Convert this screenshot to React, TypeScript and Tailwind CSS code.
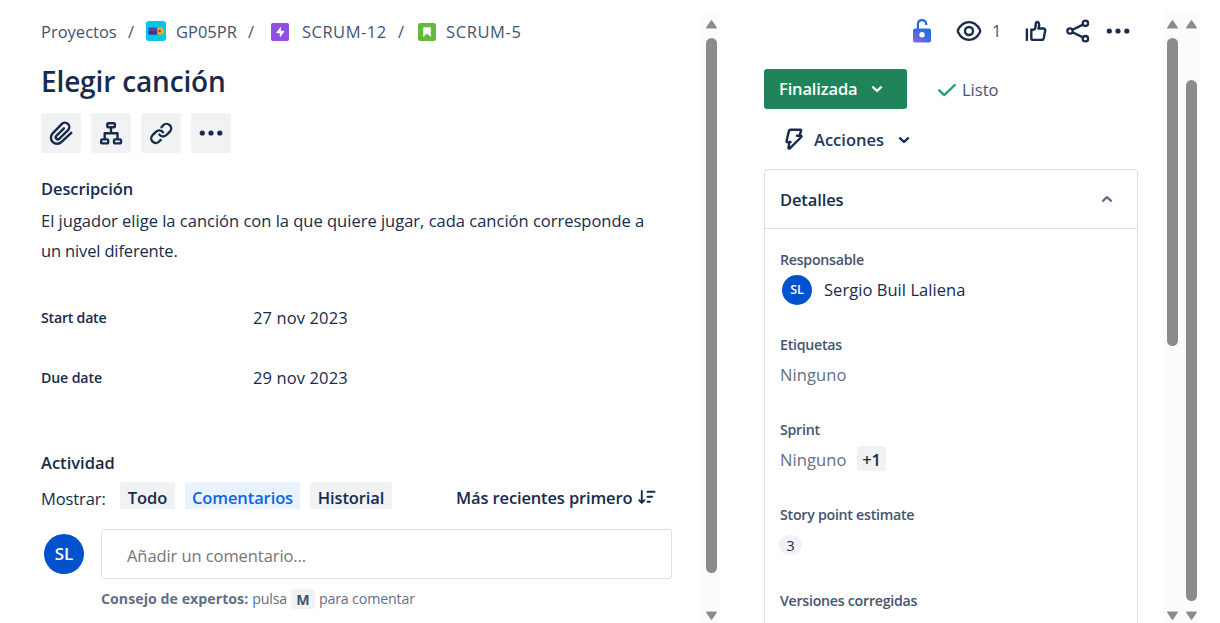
import React, { type ReactNode } from "react";

function Slash({ className }: { className: string }) {
  return <span className={`shrink-0 ${className}`}>/</span>;
}

function Chevron({ up = false }: { up?: boolean }) {
  return (
    <svg width="12" height="10" viewBox="0 0 12 10" fill="none" stroke="currentColor" strokeWidth="2.3" strokeLinecap="round" strokeLinejoin="round">
      <path d={up ? "M2 6.8 6 3.2l4 3.6" : "M2 3.2 6 7l4-3.8"} />
    </svg>
  );
}

function ToolButton({ label, children }: { label: string; children: ReactNode }) {
  return (
    <button aria-label={label} className="h-10 w-10 rounded-[3px] bg-[#f1f2f4]">
      <svg width="40" height="40" viewBox="0 0 40 40" fill="none" stroke="#172b4d" strokeWidth="2.4" strokeLinecap="round" strokeLinejoin="round">
        {children}
      </svg>
    </button>
  );
}

function Dots() {
  return (
    <g fill="#172b4d" stroke="none">
      <circle cx="11.3" cy="20" r="2.6" />
      <circle cx="20" cy="20" r="2.6" />
      <circle cx="28.8" cy="20" r="2.6" />
    </g>
  );
}

function ScrollBar({ thumb }: { thumb: string }) {
  return (
    <div className="mt-[10px] flex h-[613px] w-[19px] shrink-0 flex-col items-center bg-[#fcfcfc] pt-[10px] pb-[3px]">
      <svg width="11" height="9" viewBox="0 0 11 9" className="shrink-0" fill="#8b8b8b">
        <path d="M4.8.6q.7-.9 1.4 0L10.8 7.4q.5 1.1-.6 1.1H.8Q-.3 8.5.2 7.4Z" />
      </svg>
      <div className={`w-[11px] shrink-0 rounded-full bg-[#8b8b8b] ${thumb}`} />
      <svg width="11" height="9" viewBox="0 0 11 9" className="mt-auto shrink-0" fill="#8b8b8b">
        <path d="M4.8 8.4q.7.9 1.4 0L10.8 1.6Q11.3.5 10.2.5H.8Q-.3.5.2 1.6Z" />
      </svg>
    </div>
  );
}

function Field({ label, className = "mb-[25px]", children }: { label: string; className?: string; children?: ReactNode }) {
  return (
    <div className={className}>
      <div className="h-[30px] text-[14.2px] leading-[30px] font-semibold tracking-[-0.26px] text-[#44546f]">{label}</div>
      <div className="flex h-[30px] items-center leading-[30px]">{children}</div>
    </div>
  );
}

function IssueMain() {
  return (
    <main className="w-[702px] shrink-0 pt-[17px] pl-[41px]">
      <nav className="flex h-[30px] items-center leading-[30px] text-[#44546f]">
        <span className="w-[87px] shrink-0">Proyectos</span>
        <Slash className="w-[18px]" />
        <span className="w-[31px] shrink-0">
          <svg className="mb-[2px]" width="20" height="20" viewBox="0 0 20 20">
            <rect width="20" height="20" rx="3" fill="#00c7e5" />
            <path d="M2.5 6.500H12v7H3.500q-1 0-1-1Z" fill="#5243aa" />
            <path d="M2.500 10H12v3.500H3.500q-1 0-1-1Z" fill="#403294" />
            <path d="M12 6.500h3q3 .4 3 3.500t-3 3.500h-3Z" fill="#ffab00" />
            <path d="M11 6.500h1v7h-1Z" fill="#ff7452" />
            <path d="M13.700 8.700v2.600M12.400 10h2.600" stroke="#403294" strokeWidth="1" />
          </svg>
        </span>
        <span className="-ml-px w-[72px] shrink-0">GP05PR</span>
        <Slash className="w-[23px]" />
        <span className="w-[31px] shrink-0">
          <svg width="18" height="18" viewBox="0 0 18 18">
            <rect width="18" height="18" rx="2" fill="#904ee2" />
            <path d="M9.800 4v4h2.900q.8.1.3.8L9 14V10H6q-.9-.1-.4-.8Z" fill="#fff" stroke="#fff" strokeWidth=".4" strokeLinejoin="round" />
          </svg>
        </span>
        <span className="w-[96px] shrink-0 tracking-[0.5px]">SCRUM-12</span>
        <Slash className="w-[20px]" />
        <span className="w-[28px] shrink-0">
          <svg width="18" height="18" viewBox="0 0 18 18">
            <rect width="18" height="18" rx="2" fill="#63ba3c" />
            <path d="M5.200 5q0-.8.8-.8h6q.8 0 .8.8v9L9 10.400 5.200 14Z" fill="#fff" />
          </svg>
        </span>
        <span className="tracking-[0.6px]">SCRUM-5</span>
      </nav>

      <h1 className="mt-[14px] h-10 text-[28px] leading-10 font-semibold tracking-[-0.15px]">Elegir canción</h1>

      <div className="mt-[12px] flex gap-[10px]">
        <ToolButton label="Adjuntar">
          <path transform="translate(7.600 7.400) scale(1.020)" d="m22.200 12.200-9.500 8.900a6 6 0 0 1-8.700-8.400l8.800-9.100a4.300 4.300 0 0 1 6.300 5.900l-8.500 8.400a2 2 0 0 1-3-2.800l7.400-7.300" />
        </ToolButton>
        <ToolButton label="Añadir incidencia secundaria">
          <rect x="16.300" y="10.200" width="7.600" height="4" rx="1" />
          <rect x="10.200" y="26.400" width="7" height="4" rx="1" />
          <rect x="23" y="26.400" width="7" height="4" rx="1" />
          <path d="M20 15v5M13.700 25.500V20.300h12.800v5.200" />
        </ToolButton>
        <ToolButton label="Enlazar">
          <g transform="translate(8.200 8.400)">
            <path d="M10.200 13.200a4.600 4.600 0 0 0 7 .4l3.500-3.400a4.400 4.400 0 0 0-6.700-6.300l-1.700 2" />
            <path d="M13.800 10.800a4.600 4.600 0 0 0-7-.4l-3.500 3.400a4.400 4.400 0 0 0 6.700 6.300l1.500-1.600" />
          </g>
        </ToolButton>
        <ToolButton label="Más"><Dots /></ToolButton>
      </div>

      <h2 className="mt-[21px] h-[30px] leading-[30px] font-semibold tracking-[-0.1px]">Descripción</h2>
      <p className="mt-[2px] h-[60px] w-[625px] leading-[30px]">
        El jugador elige la canción con la que quiere jugar, cada canción corresponde a<br />
        <span className="tracking-[-0.15px]">un nivel diferente.</span>
      </p>

      <div className="mt-[37px] flex h-[30px] items-center leading-[30px]">
        <span className="w-[212px] text-[14.2px] font-semibold tracking-[-0.25px]">Start date</span>
        <span className="tracking-[0.12px]">27 nov 2023</span>
      </div>
      <div className="mt-[30px] flex h-[30px] items-center leading-[30px]">
        <span className="w-[212px] text-[14.2px] font-semibold tracking-[-0.15px]">Due date</span>
        <span className="tracking-[0.12px]">29 nov 2023</span>
      </div>

      <h2 className="mt-[55px] h-[30px] leading-[30px] font-semibold">Actividad</h2>
      <div className="mt-1 flex h-[27px] leading-[31px]">
        <span className="w-[79px] pt-px tracking-[-0.1px]">Mostrar:</span>
        <button className="mr-[10px] w-[55px] rounded-t-[3px] bg-[#f1f2f4] font-semibold tracking-[-0.1px]">Todo</button>
        <button className="mr-[10px] w-[115px] rounded-t-[3px] bg-[#e9f2ff] font-semibold tracking-[-0.1px] text-[#0c66e4]">Comentarios</button>
        <button className="w-[82px] rounded-t-[3px] bg-[#f1f2f4] font-semibold tracking-[-0.13px]">Historial</button>
        <button className="ml-[64px] flex font-semibold tracking-[-0.14px] whitespace-nowrap">
          Más recientes primero
          <svg className="mt-[8px] ml-[6px]" width="18" height="15" viewBox="0 0 18 15" fill="none" stroke="#172b4d" strokeWidth="1.900" strokeLinecap="round" strokeLinejoin="round">
            <path d="M3.800 1v11.500M1.200 10.200l2.600 2.700 2.600-2.700M9.500 1.700h7M9.500 6.700h4.600M9.500 11.700h2.400" />
          </svg>
        </button>
      </div>

      <div className="mt-5 flex">
        <span className="mt-[5px] mr-[17px] ml-[3px] h-10 w-10 rounded-full bg-[#0052cc] text-center text-[17px] leading-10 font-semibold text-white">SL</span>
        <div>
          <div className="h-[50px] w-[571px] rounded-[3px] border border-[#dcdfe4] pl-[25px] leading-[51px] tracking-[-0.08px] text-[#757575]">Añadir un comentario…</div>
          <div className="mt-[10px] flex h-[20px] items-center text-[14.2px] leading-[22px] text-[#626f86]">
            <b className="tracking-[0.02px]">Consejo de expertos:</b>
            <span className="ml-[4px] tracking-[-0.2px]">pulsa</span>
            <kbd className="mr-[4px] ml-[4px] h-5 w-6 rounded-[3px] bg-[#f1f2f4] text-center font-['Open_Sans',sans-serif] font-bold text-[#44546f]">M</kbd>
            <span className="tracking-[-0.14px]">para comentar</span>
          </div>
        </div>
      </div>
    </main>
  );
}

function IssueSide() {
  return (
    <aside className="h-[623px] w-[442px] shrink-0 overflow-hidden pt-[11px] pl-[43px]">
      <div className="flex h-10 items-center pl-[148px]">
        <svg className="mr-[23px] shrink-0" width="20" height="26" viewBox="0 0 20 26">
          <defs>
            <linearGradient id="lock" x1="0" y1="1" x2="1" y2="0">
              <stop offset="0" stopColor="#8b68dc" />
              <stop offset=".55" stopColor="#3f6ae0" />
              <stop offset="1" stopColor="#1d6ae5" />
            </linearGradient>
          </defs>
          <path d="M5.900 11V6q.3-3.800 4.100-3.800t4.200 3.800v1" fill="none" stroke="#2468e2" strokeWidth="2.200" />
          <rect x="1" y="10.400" width="18" height="14.200" rx="2" fill="url(#lock)" />
          <circle cx="10" cy="16.700" r="2.700" fill="#fff" />
        </svg>
        <svg className="mr-[9px] shrink-0" width="28" height="24" viewBox="0 0 28 24" fill="none" stroke="#172b4d" strokeWidth="2.400">
          <path d="M14 3.100c4.900 0 8.400 2.900 10.800 7.400q.8 1.500 0 3C22.400 18 18.900 20.900 14 20.900S5.600 18 3.200 13.500q-.8-1.500 0-3C5.600 6 9.100 3.100 14 3.100Z" />
          <circle cx="14" cy="12" r="4" />
        </svg>
        <span className="w-[32px] leading-[42px] text-[#44546f]">1</span>
        <svg className="mr-[18px] shrink-0" width="24" height="24" viewBox="0 0 24 24" fill="none" stroke="#172b4d" strokeWidth="2.400" strokeLinecap="round" strokeLinejoin="round">
          <path d="M2.900 10.500v10.400M7.300 10.700h2.300q1.600-.4 1.800-2.200l.5-4.300q.3-1.500 1.700-1.200 1.700.6 1.600 2.700-.1 2-.8 3.800h4.900q2.100.2 1.900 2.300l-1.400 7.300q-.5 1.800-2.200 1.800H9.300q-2 0-2-2Z" />
        </svg>
        <svg className="mr-[16px] shrink-0" width="24" height="24" viewBox="0 0 24 24" fill="none" stroke="#172b4d" strokeWidth="2.300">
          <circle cx="4" cy="12" r="2.700" />
          <circle cx="19.400" cy="4.300" r="2.700" />
          <circle cx="19.400" cy="19.700" r="2.700" />
          <path d="m6.600 10.700 10.300-5.100M6.600 13.300l10.300 5.100" />
        </svg>
        <svg className="shrink-0" width="40" height="40" viewBox="8 0 40 40"><Dots /></svg>
      </div>

      <div className="mt-[18px] flex h-10 items-center">
        <button className="flex h-10 w-[143px] items-center rounded-[3px] bg-[#1f845a] pl-[15px] font-semibold tracking-[-0.15px] text-white">
          <span className="w-[92px] pt-px text-left">Finalizada</span>
          <Chevron />
        </button>
        <svg className="mt-px mr-[5px] ml-[30px]" width="20" height="16" viewBox="0 0 20 16" fill="none" stroke="#22a06b" strokeWidth="2.300" strokeLinecap="round" strokeLinejoin="round">
          <path d="m2.200 8.300 5 4.800L17.800 3" />
        </svg>
        <span className="pt-[2px] text-[#44546f]">Listo</span>
      </div>

      <button className="mt-[16px] flex h-[30px] items-center pl-[20px] font-semibold">
        <svg className="mr-[10px] mb-[2px]" width="20" height="24" viewBox="0 0 20 24" fill="none" stroke="#172b4d" strokeWidth="2.400" strokeLinecap="round" strokeLinejoin="round">
          <path d="M6.300 2.700h9.900q1.200.1.900 1.200l-1.600 4.700h1.300q1.300.3.500 1.400L5.800 21.400q-1.500.8-1.300-1l.9-5H3.900q-1.700-.2-1.300-1.700L5 3.600q.3-.9 1.300-.9ZM6.500 14.900H5.200M13 8.700h2.500" />
        </svg>
        <span className="w-[84px] text-left text-[#253858]">Acciones</span>
        <Chevron />
      </button>

      <section className="mt-[14px] h-[470px] w-[374px] rounded-t-[4px] border border-b-0 border-[#dcdfe4]">
        <header className="flex h-[59px] items-center justify-between border-b border-[#dcdfe4] pr-[24px] pl-[15px]">
          <h2 className="leading-[59px] font-semibold tracking-[-0.12px]">Detalles</h2>
          <span className="text-[#626f86]"><Chevron up /></span>
        </header>
        <div className="pt-[16px] pl-[15px]">
          <Field label="Responsable">
            <span className="mr-[12px] ml-[2px] h-[30px] w-[30px] rounded-full bg-[#0052cc] text-center text-[12.5px] leading-[30px] font-semibold text-white">SL</span>
            <span className="tracking-[0.05px]">Sergio Buil Laliena</span>
          </Field>
          <Field label="Etiquetas"><span className="tracking-[0.1px] text-[#626f86]">Ninguno</span></Field>
          <Field label="Sprint">
            <span className="w-[77px] tracking-[0.1px] text-[#626f86]">Ninguno</span>
            <span className="mb-[3px] h-[25px] w-[29px] rounded-[3px] bg-[#f1f2f4] text-center leading-[27px] font-semibold tracking-[-0.1px]">+1</span>
          </Field>
          <Field label="Story point estimate" className="mb-[26px]">
            <span className="-ml-px h-5 w-[23px] rounded-full bg-[#f1f2f4] text-center text-[14.2px] leading-[21px]">3</span>
          </Field>
          <Field label="Versiones corregidas" className="" />
        </div>
      </section>
    </aside>
  );
}

export default function App() {
  return (
    <div className="flex h-[623px] w-[1220px] overflow-hidden bg-white font-['Open_Sans','Noto_Sans',sans-serif] text-[16.5px] text-[#172b4d]">
      <IssueMain />
      <ScrollBar thumb="mt-[9px] h-[535px]" />
      <IssueSide />
      <ScrollBar thumb="mt-[9px] h-[308px]" />
      <ScrollBar thumb="mt-[51px] h-[521px]" />
    </div>
  );
}
